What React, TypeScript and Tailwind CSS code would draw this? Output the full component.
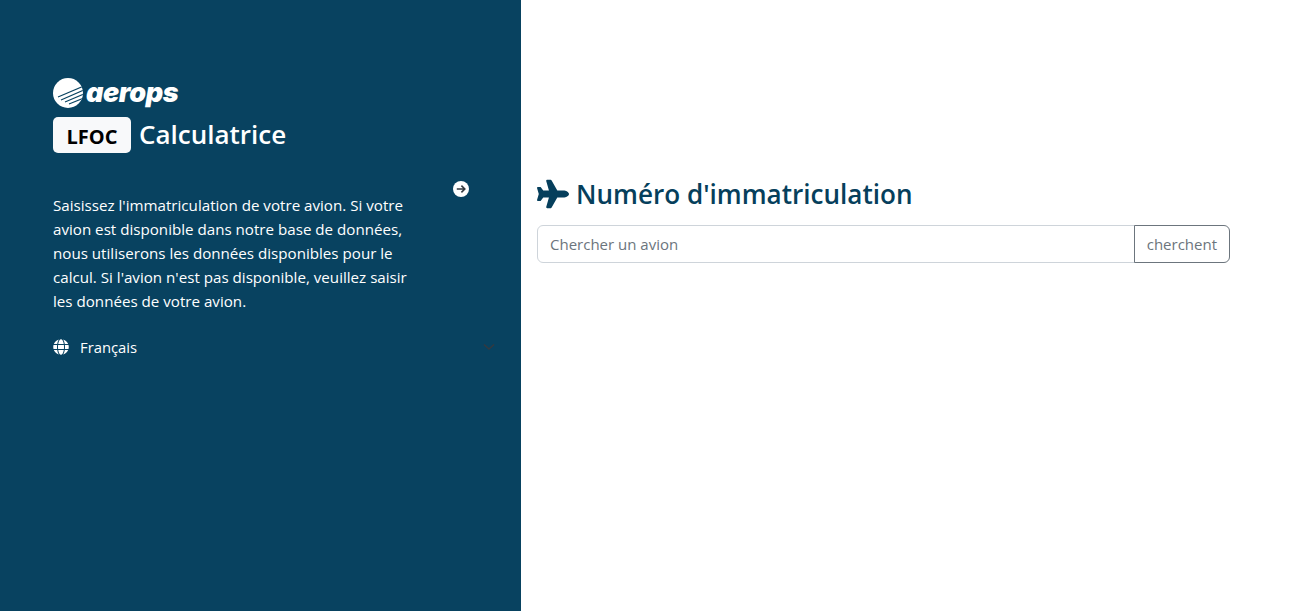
import { FaGlobe, FaPlane } from "react-icons/fa";

const font = "font-['Open_Sans','Noto_Sans',sans-serif]";

function AeropsLogo() {
  return (
    <div className="flex items-center h-[30px]">
      <svg width="34" height="30" viewBox="0 0 34 30" className="shrink-0">
        <defs>
          <clipPath id="disc">
            <circle cx="15" cy="15" r="15" />
          </clipPath>
        </defs>
        <circle cx="15" cy="15" r="15" fill="#fff" />
        <g clipPath="url(#disc)" stroke="#084260" strokeWidth="1.1" fill="none">
          <path d="M5 19 L31 8" />
          <path d="M8 22 L31 12" />
          <path d="M12 24 L31 16" />
          <path d="M16 26 L31 20" />
        </g>
      </svg>
      <span className="ml-[-1px] font-['Inter',sans-serif] text-[27px] leading-[30px] font-black italic tracking-[-0.4px] text-white">
        aerops
      </span>
    </div>
  );
}

export default function App() {
  return (
    <div className={`flex h-screen bg-white ${font}`}>
      <aside className="relative w-[521px] shrink-0 bg-[#084260] pl-[53px] pt-[78px] text-white">
        <AeropsLogo />
        <div className="mt-[9px] flex items-center">
          <span className="flex h-[36px] w-[78px] items-center justify-center rounded-[5px] bg-[#f8f9fa] pt-[3px] text-[20px] font-bold text-black">
            LFOC
          </span>
          <h1 className="ml-2 mt-[-3px] text-[26px] leading-[36px] font-semibold text-white">Calculatrice</h1>
        </div>

        <button className="absolute left-[453px] top-[181px] flex h-4 w-4 items-center justify-center">
          <svg width="16" height="16" viewBox="0 0 16 16" fill="none">
            <circle cx="8" cy="8" r="8" fill="#fff" />
            <path d="M3.8 8 H11.6 M8.4 4.6 L11.8 8 L8.4 11.4" stroke="#343a40" strokeWidth="1.6" />
          </svg>
        </button>

        <p className="mt-[40px] w-[365px] text-[15.15px] leading-[24px] text-white">
          Saisissez l'immatriculation de votre avion. Si votre avion est disponible dans notre base de données, nous
          utiliserons les données disponibles pour le calcul. Si l'avion n'est pas disponible, veuillez saisir les
          données de votre avion.
        </p>

        <div className="mt-[22px] flex w-[442px] items-center justify-between">
          <div className="flex items-center">
            <FaGlobe size={16} />
            <span className="ml-[11px] text-[14.8px] leading-[24px]">Français</span>
          </div>
          <svg width="12" height="8" viewBox="0 0 12 8" fill="none" stroke="#343a40" strokeWidth="1.6">
            <path d="M1 1.5 L6 6 L11 1.5" />
          </svg>
        </div>
      </aside>

      <main className="flex-1 pl-4 pr-[65px] pt-[175px]">
        <h2 className="flex items-center text-[26.1px] leading-[38px] font-semibold text-[#063f5c]">
          <FaPlane size={32} className="shrink-0" />
          <span className="ml-[7px]">Numéro d'immatriculation</span>
        </h2>
        <div className="mt-3 flex h-[38px]">
          <input
            placeholder="Chercher un avion"
            className="min-w-0 flex-1 rounded-l-[6px] border border-[#ced4da] px-3 text-[15px] text-[#212529] outline-none placeholder:text-[#6c757d]"
          />
          <button className="-ml-px rounded-r-[6px] border border-[#6c757d] px-3 text-[15px] text-[#6c757d]">
            cherchent
          </button>
        </div>
      </main>
    </div>
  );
}
